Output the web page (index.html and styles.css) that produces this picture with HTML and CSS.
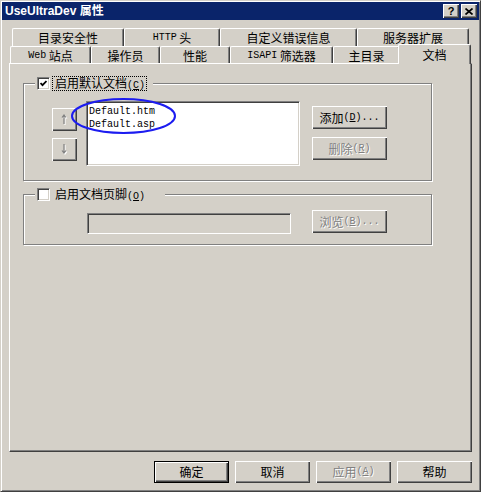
FILE: index.html
```html
<!DOCTYPE html>
<html lang="zh-CN">
<head>
    <meta charset="UTF-8">
    <link rel="stylesheet" href="styles.css">
    <title>UseUltraDev 属性</title>
</head>
<body>
<div class="window">
    <div class="titlebar">
        <span class="title">UseUltraDev 属性</span>
        <span class="caption-btns">
            <span class="cap-btn">?</span>
            <span class="cap-btn">
                <svg width="8" height="7" viewBox="0 0 8 7"><path d="M0.5 0.5 L7.5 6.5 M7.5 0.5 L0.5 6.5" stroke="#000" stroke-width="1.7" fill="none"/></svg>
            </span>
        </span>
    </div>

    <div class="sheet">
        <div class="tabs">
            <div class="tab-row back">
                <div class="tab t-sec">目录安全性</div>
                <div class="tab t-http"><span class="lat">HTTP</span>&nbsp;头</div>
                <div class="tab t-err">自定义错误信息</div>
                <div class="tab t-ext">服务器扩展</div>
            </div>
            <div class="tab-row front">
                <div class="tab t-web"><span class="lat">Web</span>&nbsp;站点</div>
                <div class="tab t-ops">操作员</div>
                <div class="tab t-perf">性能</div>
                <div class="tab t-isapi"><span class="lat">ISAPI</span>&nbsp;筛选器</div>
                <div class="tab t-home">主目录</div>
                <div class="tab selected">文档</div>
            </div>
        </div>

        <div class="panel">
            <fieldset class="group">
                <legend class="legend-docs">
                    <span class="check">
                        <svg width="7" height="7" viewBox="0 0 7 7"><path d="M0.5 3 L2.5 5.2 L6.5 1" stroke="#000" stroke-width="1.8" fill="none"/></svg>
                    </span>
                    <span class="check-label focus">启用默认文档<span class="lat">(<u>C</u>)</span></span>
                </legend>
                <div class="docs-body">
                    <div class="arrows">
                        <button type="button" class="btn arrow-btn" disabled>
                            <svg width="9" height="11" viewBox="0 0 9 11">
                                <path d="M5 2 V11 M3 4.5 L5 2 L7 4.5" stroke="#fff" stroke-width="1.2" fill="none"/>
                                <path d="M4 1 V10 M2 3.5 L4 1 L6 3.5" stroke="#808080" stroke-width="1.2" fill="none"/>
                            </svg>
                        </button>
                        <button type="button" class="btn arrow-btn" disabled>
                            <svg width="9" height="11" viewBox="0 0 9 11">
                                <path d="M5 1 V10 M3 7.5 L5 10 L7 7.5" stroke="#fff" stroke-width="1.2" fill="none"/>
                                <path d="M4 0 V9 M2 6.5 L4 9 L6 6.5" stroke="#808080" stroke-width="1.2" fill="none"/>
                            </svg>
                        </button>
                    </div>
                    <div class="list-wrap">
                        <div class="listbox">
                            <div class="list-item">Default.htm</div>
                            <div class="list-item">Default.asp</div>
                        </div>
                        <svg class="ring" width="108" height="40" viewBox="0 0 108 40">
                            <ellipse cx="53.5" cy="19" rx="51.5" ry="17" stroke="#1c1cf0" stroke-width="2" fill="none"/>
                        </svg>
                    </div>
                    <div class="side-btns">
                        <button type="button" class="btn">添加<span class="lat">(<u>D</u>)...</span></button>
                        <button type="button" class="btn disabled" disabled>删除<span class="lat">(<u>R</u>)</span></button>
                    </div>
                </div>
            </fieldset>

            <fieldset class="group">
                <legend class="legend-footer">
                    <span class="check"></span>
                    <span class="check-label">启用文档页脚<span class="lat">(<u>O</u>)</span></span>
                </legend>
                <div class="footer-body">
                    <div class="textfield"></div>
                    <button type="button" class="btn disabled" disabled>浏览<span class="lat">(<u>B</u>)...</span></button>
                </div>
            </fieldset>
        </div>

        <div class="actions">
            <button type="button" class="btn default">确定</button>
            <button type="button" class="btn">取消</button>
            <button type="button" class="btn disabled" disabled>应用<span class="lat">(<u>A</u>)</span></button>
            <button type="button" class="btn">帮助</button>
        </div>
    </div>
</div>
</body>
</html>
```

FILE: styles.css
```css
body {
    margin: 0;
    background: #d4d0c8;
    color: #000000;
    font-family: "Noto Sans CJK SC", sans-serif;
    font-size: 12px;
    line-height: 12px;
}

.lat {
    font-family: "Liberation Mono", monospace;
    font-size: 10px;
    line-height: 8px;
}

/* window frame */
.window {
    width: 481px;
    height: 492px;
    box-sizing: border-box;
    display: flex;
    flex-direction: column;
    padding: 1px;
    background: #d4d0c8;
    border: 1px solid;
    border-color: #d4d0c8 #404040 #404040 #d4d0c8;
    box-shadow: inset 1px 1px #ffffff, inset -1px -1px #808080;
}

.titlebar {
    height: 18px;
    display: flex;
    align-items: center;
    justify-content: space-between;
    padding: 0 2px 0 3px;
    background: #0a246a;
    color: #ffffff;
}

.title {
    font-family: "Liberation Sans", "Noto Sans CJK SC", sans-serif;
    font-size: 12px;
    font-weight: bold;
}

.caption-btns {
    display: flex;
    gap: 2px;
}

.cap-btn {
    width: 16px;
    height: 14px;
    display: flex;
    align-items: center;
    justify-content: center;
    background: #d4d0c8;
    color: #000000;
    box-shadow: inset 1px 1px #ffffff, inset -1px -1px #404040, inset -2px -2px #808080;
    font-family: "Liberation Sans", sans-serif;
    font-size: 11px;
    font-weight: bold;
}

.sheet {
    flex: 1;
    display: flex;
    flex-direction: column;
    padding: 8px 7px 7px 7px;
}

/* tabs */
.tab-row {
    display: flex;
}

.tab-row.back {
    height: 18px;
    padding: 0 3px;
}

.tab-row.front {
    height: 17px;
    padding: 0 3px 0 1px;
}

.tab {
    box-sizing: border-box;
    display: flex;
    align-items: center;
    justify-content: center;
    padding-top: 2px;
    border-top: 1px solid #ffffff;
    border-left: 1px solid #ffffff;
    border-right: 1px solid #404040;
    border-radius: 2px 2px 0 0;
    box-shadow: inset -1px 0 #808080;
    white-space: nowrap;
}

.tab-row.back .tab {
    padding-top: 0;
}

.t-sec { width: 112px; }
.t-http { width: 96px; }
.t-err { width: 137px; }
.t-ext { width: 112px; }
.t-web { width: 81px; }
.t-ops { width: 69px; }
.t-perf { width: 70px; }
.t-isapi { width: 103px; }
.t-home { width: 67px; }

.tab.selected {
    position: relative;
    z-index: 1;
    width: 73px;
    height: 20px;
    margin: -2px -2px 0 -2px;
    padding: 1px 0 1px 0;
    background: #d4d0c8;
}

.panel {
    flex: 1;
    box-sizing: border-box;
    padding: 12px 0 0 13px;
    border: 1px solid;
    border-color: #ffffff #404040 #404040 #ffffff;
    box-shadow: inset -1px -1px #808080;
}

/* group boxes */
.group {
    width: 409px;
    box-sizing: border-box;
    margin: 0;
    padding: 0;
    border: 1px solid #808080;
    box-shadow: inset 1px 1px #ffffff, 1px 1px #ffffff;
}

.group + .group {
    margin-top: 6px;
}

.group legend {
    display: flex;
    align-items: center;
    margin-left: 11px;
    padding: 0 6px 0 2px;
    background: #d4d0c8;
}

.group legend.legend-footer {
    padding-right: 18px;
}

.check {
    width: 13px;
    height: 13px;
    box-sizing: border-box;
    display: flex;
    align-items: center;
    justify-content: center;
    background: #ffffff;
    border: 1px solid;
    border-color: #808080 #ffffff #ffffff #808080;
    box-shadow: inset 1px 1px #404040, inset -1px -1px #d4d0c8;
}

.check-label {
    margin-left: 2px;
    padding: 0 1px 0 2px;
    border: 1px dotted transparent;
}

.check-label.focus {
    border-color: #000000;
}

.docs-body {
    display: flex;
    align-items: flex-start;
    padding: 10px 0 14px 28px;
}

.arrows {
    display: flex;
    flex-direction: column;
    gap: 7px;
    margin: 7px 9px 0 0;
}

.list-wrap {
    position: relative;
}

.listbox {
    width: 214px;
    height: 65px;
    box-sizing: border-box;
    padding: 3px 0 0 2px;
    background: #ffffff;
    border: 1px solid;
    border-color: #808080 #ffffff #ffffff #808080;
    box-shadow: inset 1px 1px #404040, inset -1px -1px #d4d0c8;
}

.list-item {
    font-family: "Liberation Mono", monospace;
    font-size: 10px;
    line-height: 13px;
}

.ring {
    position: absolute;
    left: -16px;
    top: -4px;
}

.side-btns {
    display: flex;
    flex-direction: column;
    gap: 8px;
    margin: 5px 0 0 12px;
}

.footer-body {
    display: flex;
    align-items: flex-start;
    gap: 21px;
    padding: 8px 0 10px 63px;
}

.textfield {
    width: 204px;
    height: 21px;
    margin-top: 3px;
    box-sizing: border-box;
    background: #d4d0c8;
    border: 1px solid;
    border-color: #808080 #ffffff #ffffff #808080;
    box-shadow: inset 1px 1px #404040, inset -1px -1px #d4d0c8;
}

/* push buttons */
.btn {
    width: 75px;
    height: 23px;
    box-sizing: border-box;
    display: flex;
    align-items: center;
    justify-content: center;
    margin: 0;
    padding: 0;
    border: none;
    background: #d4d0c8;
    color: #000000;
    font: inherit;
    box-shadow: inset 1px 1px #ffffff, inset -1px -1px #404040, inset -2px -2px #808080;
}

.btn.disabled {
    color: #808080;
    text-shadow: 1px 1px #ffffff;
}

.arrow-btn {
    width: 25px;
}

.btn.default {
    border: 1px solid #000000;
}

.actions {
    display: flex;
    justify-content: flex-end;
    gap: 6px;
    margin-top: 9px;
}

.actions .btn {
    height: 22px;
}
```
